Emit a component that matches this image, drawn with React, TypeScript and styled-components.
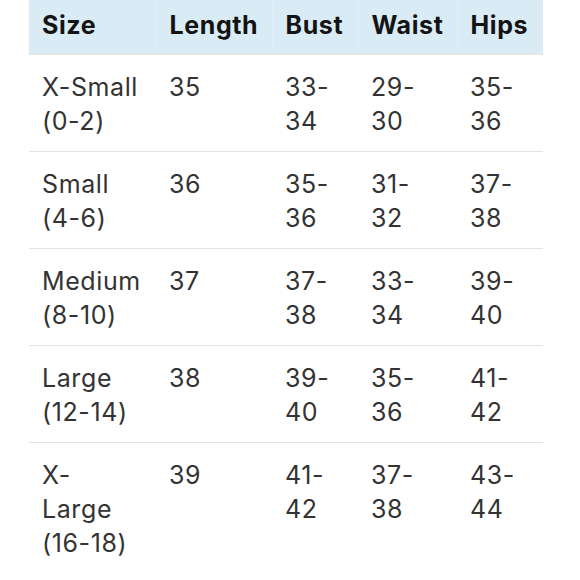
import React from "react";
import styled, { createGlobalStyle } from "styled-components";

const Global = createGlobalStyle`
  html, body { margin: 0; padding: 0; background: #ffffff; }
  body { font-family: Inter, "Liberation Sans", Arial, sans-serif; }
`;

const Page = styled.div`
  width: 580px;
  height: 580px;
  overflow: hidden;
  padding: 0 37px 0 29px;
  box-sizing: border-box;
`;

const Table = styled.table`
  width: 514px;
  border-collapse: collapse;
  table-layout: fixed;
`;

const HeadCell = styled.th<{ $w: number }>`
  width: ${(p) => p.$w}px;
  height: 54px;
  padding: 0 0 4px 13px;
  box-sizing: border-box;
  background: #d9ecf6;
  border-bottom: 2px solid #e4e6e8;
  border-left: 1px solid #e0eff7;
  text-align: left;
  vertical-align: middle;
  font-size: 25px;
  font-weight: 700;
  color: #141414;
  letter-spacing: 0.6px;
  &:first-child { border-left: none; }
`;

const Row = styled.tr`
  border-bottom: 1px solid #e3e3e3;
  &:last-child { border-bottom: none; }
`;

const Cell = styled.td`
  padding: 15px 4px 13px 13px;
  height: 68px;
  vertical-align: top;
  font-size: 25px;
  line-height: 34px;
  color: #333333;
  letter-spacing: 0.6px;
`;

const cols = [
  { label: "Size", w: 127 },
  { label: "Length", w: 116 },
  { label: "Bust", w: 86 },
  { label: "Waist", w: 99 },
  { label: "Hips", w: 86 },
];

const rows: string[][][] = [
  [["X-Small", "(0-2)"], ["35"], ["33-", "34"], ["29-", "30"], ["35-", "36"]],
  [["Small", "(4-6)"], ["36"], ["35-", "36"], ["31-", "32"], ["37-", "38"]],
  [["Medium", "(8-10)"], ["37"], ["37-", "38"], ["33-", "34"], ["39-", "40"]],
  [["Large", "(12-14)"], ["38"], ["39-", "40"], ["35-", "36"], ["41-", "42"]],
  [["X-", "Large", "(16-18)"], ["39"], ["41-", "42"], ["37-", "38"], ["43-", "44"]],
];

export default function App() {
  return (
    <Page>
      <Global />
      <Table>
        <thead>
          <tr>
            {cols.map((c) => (
              <HeadCell key={c.label} $w={c.w}>
                {c.label}
              </HeadCell>
            ))}
          </tr>
        </thead>
        <tbody>
          {rows.map((r, i) => (
            <Row key={i}>
              {r.map((lines, j) => (
                <Cell key={j}>
                  {lines.map((l, k) => (
                    <React.Fragment key={k}>
                      {k > 0 && <br />}
                      {l}
                    </React.Fragment>
                  ))}
                </Cell>
              ))}
            </Row>
          ))}
        </tbody>
      </Table>
    </Page>
  );
}
